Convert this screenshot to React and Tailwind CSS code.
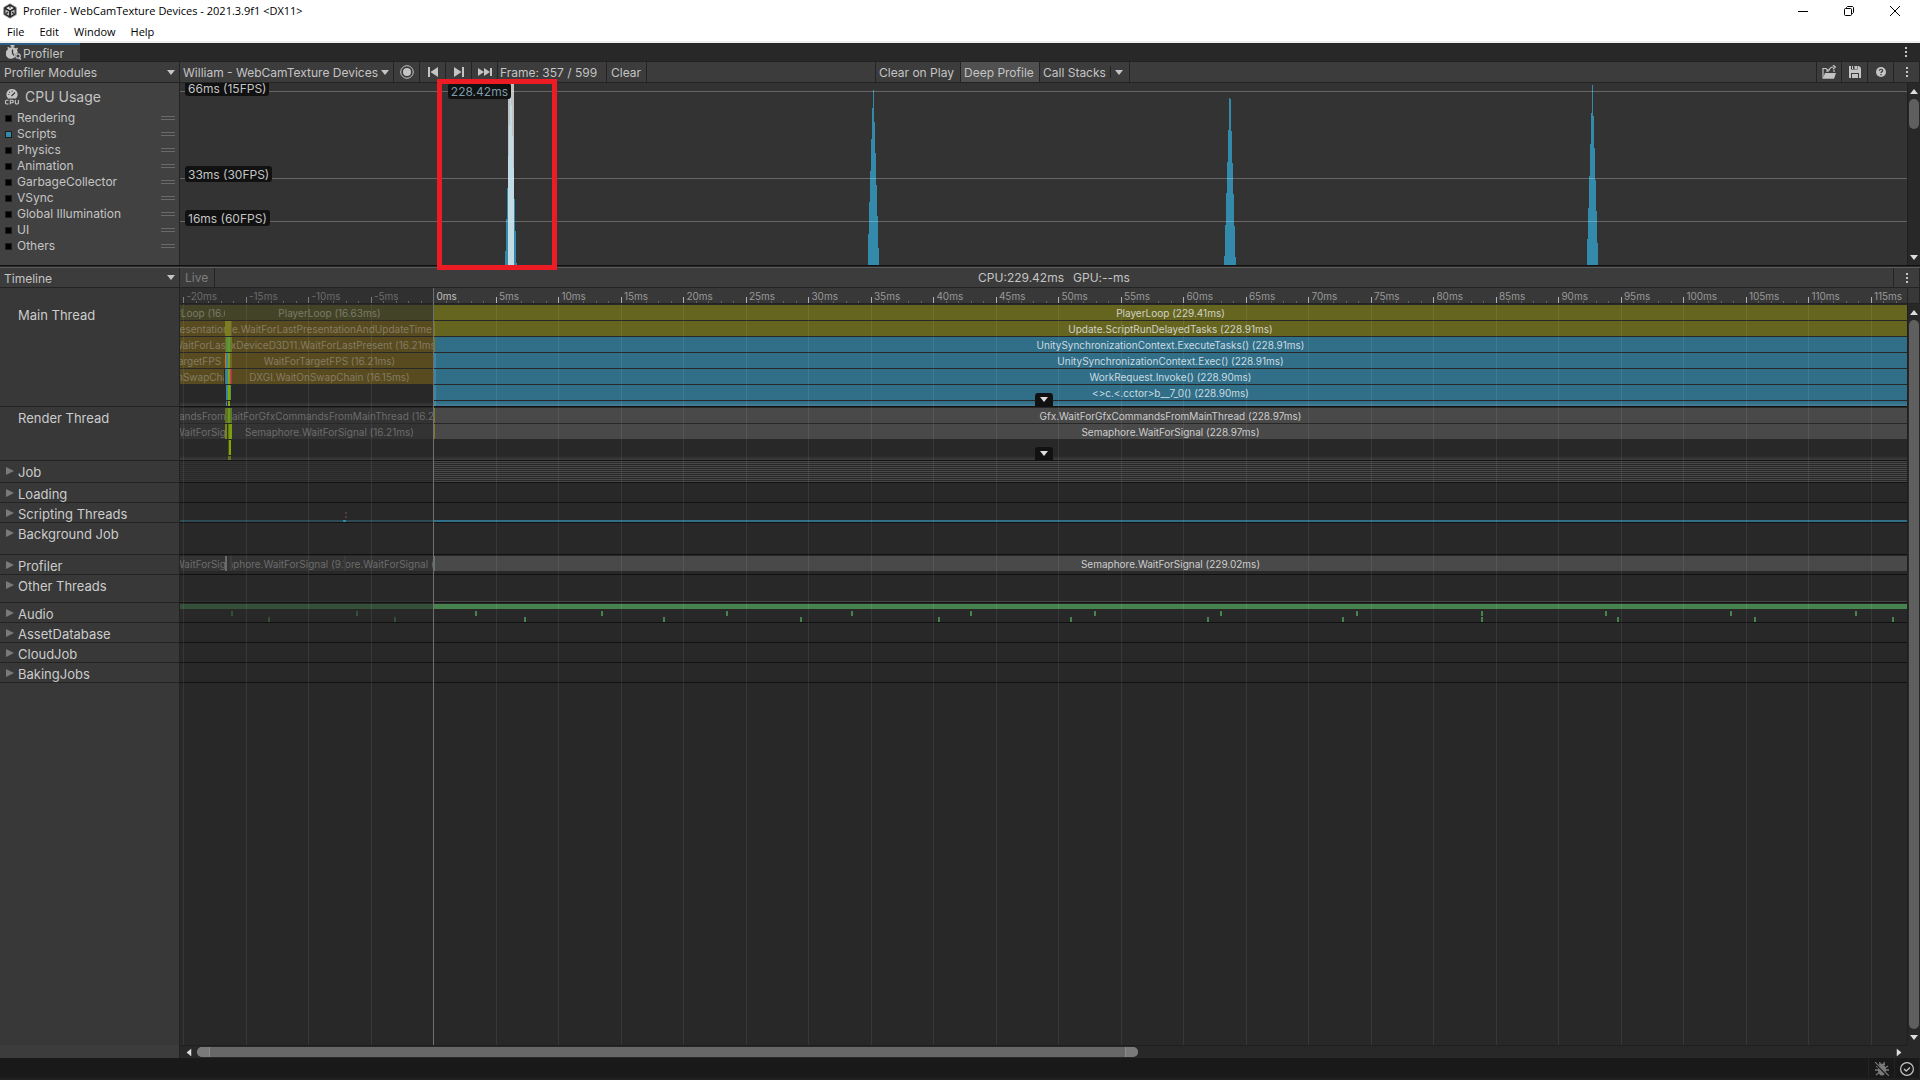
import React from "react";

/* ---------- data ---------- */

const MODULES = [
  ["Rendering", false],
  ["Scripts", true],
  ["Physics", false],
  ["Animation", false],
  ["GarbageCollector", false],
  ["VSync", false],
  ["Global Illumination", false],
  ["UI", false],
  ["Others", false],
];

// Column heights in px for each one-pixel column of a spike.
const SPIKES = [
  { at: 325, cols: [14, 46, 77, 109, 140, 168, 160, 129, 97, 66, 34, 2] },
  { at: 688, cols: [31, 63, 94, 126, 157, 175, 143, 112, 80, 49, 17] },
  { at: 1044, cols: [9, 40, 72, 103, 135, 167, 166, 134, 102, 71, 39, 8] },
  { at: 1407, cols: [26, 57, 89, 121, 152, 180, 149, 117, 85, 54, 22] },
];

const VIEW = 1727;
const MS = 12.5;
const ZERO = 253.4;
const pct = (px) => `${(px / VIEW) * 100}%`;
const timeToPct = (ms) => pct(ZERO + ms * MS);

const MAJOR = Array.from({ length: 28 }, (_, i) => -20 + i * 5);
const MINOR = Array.from({ length: 138 }, (_, i) => -20 + i).filter((t) => t % 5 !== 0);

const OLIVE_DIM = "bg-[#434327] text-[#7b7b68]";
const OLIVE = "bg-[#656520] text-[#d2d2c6]";
const GOLD_DIM = "bg-[#584b1f] text-[#857c62]";
const BLUE = "bg-[#316f88] text-[#cbdbe1]";
const GREY = "bg-[#494949] text-[#cdcdcd]";
const GREY_DIM = "bg-[#333333] text-[#6c6c6c]";

const A = [0, 45];
const B = [46, 253];
const C = [254, VIEW];

const past = (label, tone) => [
  { span: A, label, tone },
  { span: B, label, tone },
];

const MAIN_ROWS = [
  [...past("PlayerLoop (16.63ms)", OLIVE_DIM), { span: C, label: "PlayerLoop (229.41ms)", tone: OLIVE }],
  [
    ...past("TimeUpdate.WaitForLastPresentationAndUpdateTime (16.21ms)", GOLD_DIM),
    { span: C, label: "Update.ScriptRunDelayedTasks (228.91ms)", tone: OLIVE },
  ],
  [
    ...past("GfxDeviceD3D11.WaitForLastPresent (16.21ms)", GOLD_DIM),
    { span: C, label: "UnitySynchronizationContext.ExecuteTasks() (228.91ms)", tone: BLUE },
  ],
  [
    ...past("WaitForTargetFPS (16.21ms)", GOLD_DIM),
    { span: C, label: "UnitySynchronizationContext.Exec() (228.91ms)", tone: BLUE },
  ],
  [
    ...past("DXGI.WaitOnSwapChain (16.15ms)", GOLD_DIM),
    { span: C, label: "WorkRequest.Invoke() (228.90ms)", tone: BLUE },
  ],
  [{ span: C, label: "<>c.<.cctor>b__7_0() (228.90ms)", tone: BLUE }],
  [{ span: C, label: "", tone: BLUE }],
];

// Thin samples between two frames: [x, width, colour] per row.
const MAIN_SLIVERS = [
  [[45, 1, "bg-[#434327]"]],
  [[45, 6, "bg-[#7c7c22]"], [51, 1, "bg-[#6b6030]"], [253, 2, "bg-[#7c7c22]"]],
  [[45, 1, "bg-[#6a6a28]"], [46, 2, "bg-[#5f8a3a]"], [48, 2, "bg-[#5f9a30]"], [50, 2, "bg-[#6e7a2c]"], [253, 2, "bg-[#7c7c22]"]],
  [[45, 1, "bg-[#c87818]"], [46, 2, "bg-[#3c86a0]"], [48, 2, "bg-[#7c9a1e]"], [50, 2, "bg-[#6e6824]"], [253, 1, "bg-[#c87818]"], [254, 2, "bg-[#3a86a4]"]],
  [[44, 1, "bg-[#282828]"], [45, 1, "bg-[#4c7a6a]"], [46, 2, "bg-[#3488a0]"], [48, 2, "bg-[#85a010]"], [50, 1, "bg-[#c04050]"], [51, 1, "bg-[#a03c48]"], [254, 2, "bg-[#3a86a4]"]],
  [[46, 2, "bg-[#3488a0]"], [48, 2, "bg-[#85a800]"], [50, 1, "bg-[#4c9a50]"], [254, 2, "bg-[#3a86a4]"]],
  [[46, 1, "bg-[#3488a0]"], [48, 2, "bg-[#85a010]"], [254, 2, "bg-[#3a86a4]"]],
];

const RENDER_ROWS = [
  [
    ...past("Gfx.WaitForGfxCommandsFromMainThread (16.21ms)", GREY_DIM),
    { span: C, label: "Gfx.WaitForGfxCommandsFromMainThread (228.97ms)", tone: GREY },
  ],
  [
    ...past("Semaphore.WaitForSignal (16.21ms)", GREY_DIM),
    { span: C, label: "Semaphore.WaitForSignal (228.97ms)", tone: GREY },
  ],
  [],
  [],
];

const RENDER_SLIVERS = [
  [[45, 3, "bg-[#62702a]"], [48, 2, "bg-[#6f9618]"], [50, 2, "bg-[#5c7a28]"], [254, 1, "bg-[#7c7c22]"]],
  [[45, 2, "bg-[#7c8420]"], [47, 1, "bg-[#33381c]"], [48, 2, "bg-[#5f7a14]"], [49, 3, "bg-[#7e9c10]"], [254, 1, "bg-[#7c7c22]"]],
  [[48, 1, "bg-[#46521c]"], [49, 2, "bg-[#85a800]"]],
  [[48, 3, "bg-[#5a6a1c]"]],
];

const PROFILER_ROWS = [
  [
    { span: A, label: "Semaphore.WaitForSignal (16.21ms)", tone: GREY_DIM },
    { span: [51, 164], label: "Semaphore.WaitForSignal (9.11ms)", tone: GREY_DIM },
    { span: [165, 253], label: "Semaphore.WaitForSignal (7.02ms)", tone: GREY_DIM },
    { span: C, label: "Semaphore.WaitForSignal (229.02ms)", tone: GREY },
  ],
];
const PROFILER_SLIVERS = [
  [[45, 2, "bg-[#6a6a6a]"], [47, 3, "bg-[#333333]"], [50, 2, "bg-[#3c3c3c]"], [164, 2, "bg-[#3c3c3c]"], [254, 1, "bg-[#707070]"]],
];

const AUDIO_UPPER = [51, 176, 295, 421, 546, 671, 790, 914, 1040, 1176, 1301, 1425, 1550, 1675];
const AUDIO_LOWER = [88, 214, 344, 483, 620, 758, 890, 1027, 1162, 1301, 1437, 1574, 1712];

/* ---------- icons ---------- */

const Down = ({ className = "" }) => (
  <svg viewBox="0 0 8 5" className={"h-[5px] w-2 shrink-0 " + className} fill="currentColor" aria-hidden="true">
    <path d="M0 0h8L4 5z" />
  </svg>
);

const UnityIcon = () => (
  <svg viewBox="0 0 16 16" className="size-4" aria-hidden="true">
    <path d="M8 .8 14.2 4.400v7.200L8 15.200 1.800 11.600V4.400z" fill="#222" stroke="#8a8a8a" strokeWidth=".9" />
    <path d="M8 3l3.800 2.100L8 7.300 4.200 5.100z" fill="#f2f2f2" />
    <path d="M3.400 6.400l3.700 2.200v4.100L3.400 10.600z M12.600 6.400 8.900 8.600v4.100l3.700-2.100z" fill="#bdbdbd" />
    <path d="M8 3v2.500M4 10.500l2-1.200M12 10.500l-2-1.200" stroke="#222" strokeWidth="1.200" fill="none" />
  </svg>
);

const StopwatchIcon = () => (
  <svg viewBox="0 0 16 16" className="size-4" aria-hidden="true">
    <path
      d="M4.500 0h4v1.500h-1v1A5 5 0 0 1 10 3.500l1-1 1 1-1 1.200a5.300 5.300 0 0 1 .6 3.300 3.500 3.500 0 0 0-2.600 4A5.300 5.300 0 1 1 2.200 4L1.200 2.800l1-1 1.200 1A5 5 0 0 1 5.500 2.500v-1h-1z"
      fill="#c4c4c4"
    />
    <path d="M6.500 4.500V8l1.500 2.500" stroke="#333" strokeWidth="1.300" fill="none" />
    <circle cx="12" cy="11" r="2.200" stroke="#c4c4c4" strokeWidth="1.200" fill="none" />
    <path d="M13 12.500l1.800 2" stroke="#c4c4c4" strokeWidth="1.300" />
  </svg>
);

const CpuIcon = () => (
  <svg viewBox="0 0 16 16" className="size-4" aria-hidden="true">
    <path d="M8 0a5.500 5.500 0 0 1 5.200 7.500L12 9.500H4L2.800 7.500A5.500 5.500 0 0 1 8 0z" fill="#c4c4c4" />
    <path d="M7.500 7 11 3.500M4.300 5.500h1M8 1.700v1M5.300 3l.6.6" stroke="#3a3a3a" strokeWidth="1.200" />
    <path
      d="M4.500 11.300H2.500L1.500 12v2.200l1 .8h2M6.300 15.300v-4h2l1 .8v.8l-1 .8H6.500M11.300 11v3.200l.8.800h1.500l.8-.8V11"
      stroke="#c4c4c4"
      strokeWidth="1.100"
      fill="none"
    />
  </svg>
);

const RecordIcon = () => (
  <svg viewBox="0 0 14 14" className="size-[14px]" aria-hidden="true">
    <circle cx="7" cy="7" r="6.300" stroke="#c4c4c4" fill="none" />
    <circle cx="7" cy="7" r="4" fill="#c4c4c4" />
  </svg>
);
const PrevIcon = () => (
  <svg viewBox="0 0 10 10" className="size-[10px]" fill="#c4c4c4" aria-hidden="true">
    <path d="M0 0h2v10H0zM10 0v10L2.500 5z" />
  </svg>
);
const NextIcon = () => (
  <svg viewBox="0 0 10 10" className="size-[10px]" fill="#c4c4c4" aria-hidden="true">
    <path d="M8 0h2v10H8zM0 0v10l7.500-5z" />
  </svg>
);
const LastIcon = () => (
  <svg viewBox="0 0 14 10" className="h-[10px] w-[14px]" fill="#c4c4c4" aria-hidden="true">
    <path d="M0 1v8l6-4zM6 1v8l6-4zM12 1h2v8h-2z" />
  </svg>
);
const FolderIcon = () => (
  <svg viewBox="0 0 14 14" className="size-[14px]" aria-hidden="true">
    <path d="M1 13.500V3.500h3l1.500 1.500h2" stroke="#c4c4c4" strokeWidth="1.200" fill="none" />
    <path d="M.8 13.800 3 8h11l-2 5.800z" fill="#c4c4c4" />
    <path
      d="M5 7V5.800h2M7 5.500C7.500 3 9 2 11.500 2M11 0l2.500 2L11 4.200M12 5v2"
      stroke="#c4c4c4"
      strokeWidth="1.200"
      fill="none"
    />
  </svg>
);
const SaveIcon = () => (
  <svg viewBox="0 0 12 12" className="size-3" aria-hidden="true">
    <path d="M0 0h10l2 2v10H0z" fill="#c4c4c4" />
    <path d="M2 0h6.500v3.500H2zM2 7h8v5H2z" fill="#3c3c3c" />
    <path d="M3 0h1v3H3zM5.500 0H8v3H5.500zM3 8h6v4H3z" fill="#c4c4c4" />
  </svg>
);
const HelpIcon = () => (
  <svg viewBox="0 0 10 10" className="size-[10px]" aria-hidden="true">
    <circle cx="5" cy="5" r="5" fill="#c4c4c4" />
    <path d="M3.400 3.700c.1-2 3.300-1.800 3.200 0C6.500 4.800 5 4.700 5 6" stroke="#333" strokeWidth="1.200" fill="none" />
    <path d="M4.400 7h1.200v1.200H4.400z" fill="#333" />
  </svg>
);
const Kebab = () => (
  <svg viewBox="0 0 2 10" className="h-[10px] w-0.5" fill="#c4c4c4" aria-hidden="true">
    <path d="M0 0h2v2H0zM0 4h2v2H0zM0 8h2v2H0z" />
  </svg>
);
const BugIcon = () => (
  <svg viewBox="0 0 14 14" className="size-[14px]" aria-hidden="true">
    <ellipse cx="7" cy="8" rx="4" ry="5.500" fill="#7a7a7a" />
    <path
      d="M4 2.500h6M1 4l3 2M13 4l-3 2M0 8h4M14 8h-4M1 13l3-2.500M13 13l-3-2.500M4.500 0l1 2.500M9.500 0l-1 2.500"
      stroke="#7a7a7a"
      strokeWidth="1.300"
      fill="none"
    />
    <path d="M0 1l13 13" stroke="#191919" strokeWidth="2" />
    <path d="M0 0l14 14" stroke="#7a7a7a" strokeWidth="1.200" />
  </svg>
);
const CheckCircle = () => (
  <svg viewBox="0 0 14 14" className="size-[14px]" fill="none" stroke="#c4c4c4" aria-hidden="true">
    <circle cx="7" cy="7" r="6.400" strokeWidth="1.200" />
    <path d="M4 7l2.200 2L10 5.500" strokeWidth="1.300" />
  </svg>
);

/* ---------- building blocks ---------- */

const ToolButton = ({ label, className = "", children }) => (
  <button
    type="button"
    aria-label={label}
    className={"flex h-full shrink-0 items-center border-r border-[#232323] " + className}
  >
    {children}
  </button>
);

const Dropdown = ({ label, value, className = "" }) => (
  <div className={"relative flex h-full shrink-0 items-center border-r border-[#232323] " + className}>
    <select
      aria-label={label}
      defaultValue={value}
      className="h-full w-full appearance-none bg-transparent pt-0.5 text-xs text-[#c4c4c4] outline-none"
    >
      <option>{value}</option>
    </select>
    <Down className="pointer-events-none absolute right-1" />
  </div>
);

const VScroll = ({ thumb, className = "" }) => (
  <div className={"flex w-[13px] shrink-0 flex-col items-center border-l border-[#1f1f1f] bg-[#282828] " + className}>
    <button type="button" aria-label="Scroll up" className="flex h-4 items-center text-[#dcdcdc]">
      <Down className="rotate-180" />
    </button>
    <div className="flex min-h-0 w-full flex-1 flex-col pl-px">
      <div className={"w-[10px] rounded-full bg-[#5f5f5f] " + thumb} />
    </div>
    <button type="button" aria-label="Scroll down" className="flex h-4 items-center text-[#dcdcdc]">
      <Down />
    </button>
  </div>
);

const Spike = ({ at, cols }) => (
  <svg
    className="absolute bottom-0 h-[182px] w-3"
    viewBox="0 0 12 182"
    style={{ left: pct(at) }}
    shapeRendering="crispEdges"
    fill="#338aab"
    aria-hidden="true"
  >
    {cols.map((h, i) => (
      <rect key={i} x={i} y={182 - h} width="1" height={h} />
    ))}
  </svg>
);

const ChartLabel = ({ children, className = "" }) => (
  <span className={"absolute flex h-4 items-center rounded-[3px] bg-[#111111] px-[3px] pt-0.5 text-xs " + className}>
    {children}
  </span>
);

const Bars = ({ rows, slivers }) => (
  <div className="flex flex-col gap-px pt-px">
    {rows.map((row, r) => (
      <div key={r} className="relative h-[15px]">
        {row.map((bar, i) => (
          <div
            key={i}
            className={
              "absolute inset-y-0 flex items-center justify-center overflow-hidden text-[10px] leading-none whitespace-nowrap " +
              bar.tone
            }
            style={{ left: pct(bar.span[0]), width: pct(bar.span[1] - bar.span[0]) }}
          >
            <span className="shrink-0">{bar.label}</span>
          </div>
        ))}
        {slivers[r].map(([x, w, c], i) => (
          <div key={i} className={"absolute inset-y-0 " + c} style={{ left: pct(x), width: pct(w) }} />
        ))}
      </div>
    ))}
  </div>
);

const Track = ({ name, height, fold = true, more = false, children }) => (
  <div className={"flex shrink-0 " + height}>
    <div className="w-[180px] shrink-0 border-r border-b border-[#232323] bg-[#383838]">
      {fold ? (
        <button type="button" className="flex h-5 items-center gap-1 pl-1.5 text-[13px] leading-4 text-[#cccccc]">
          <svg viewBox="0 0 8 8" className="size-2" fill="#7a7a7a" aria-hidden="true">
            <path d="M0 0l8 4-8 4z" />
          </svg>
          <span className="pt-0.5">{name}</span>
        </button>
      ) : (
        <h3 className="flex h-5 items-center pt-0.5 pl-[18px] text-[13px] leading-4 text-[#cccccc]">{name}</h3>
      )}
    </div>
    <div className="relative min-w-0 flex-1 overflow-hidden border-b border-[#111111]">
      {children}
      {more && (
        <>
          <div className="absolute inset-x-0 bottom-0 h-1 bg-gradient-to-b from-transparent to-white/10" />
          <button
            type="button"
            aria-label={"Expand " + name}
            className="absolute bottom-0 left-1/2 flex h-[13px] w-[18px] -translate-x-1/2 items-center justify-center rounded-t-[3px] bg-[#111111] text-[#dcdcdc]"
          >
            <Down />
          </button>
        </>
      )}
    </div>
  </div>
);

/* ---------- page ---------- */

export default function App() {
  return (
    <div className="flex h-screen flex-col overflow-hidden bg-[#282828] font-['Inter',sans-serif] text-xs text-[#c4c4c4]">
      <header className="shrink-0 border-b-2 border-[#f0f0f0] bg-white font-['Open_Sans',sans-serif] text-black">
        <div className="flex h-[22px] items-center pr-0.5 pl-[2px]">
          <UnityIcon />
          <h1 className="ml-[5px] flex-1 pt-px text-[11px]">Profiler - WebCamTexture Devices - 2021.3.9f1 &lt;DX11&gt;</h1>
          <button type="button" aria-label="Minimize" className="flex w-[46px] justify-center">
            <svg viewBox="0 0 10 10" className="size-[10px]" stroke="#000" aria-hidden="true">
              <path d="M0 5.500h10" />
            </svg>
          </button>
          <button type="button" aria-label="Restore" className="flex w-[46px] justify-center">
            <svg viewBox="0 0 10 10" className="size-[10px]" stroke="#000" fill="none" aria-hidden="true">
              <rect x=".5" y="2.500" width="7" height="7" rx="1" />
              <path d="M2.500 2V1.500l1-1h5l1 1v5l-1 1H8" />
            </svg>
          </button>
          <button type="button" aria-label="Close" className="flex w-[46px] justify-center">
            <svg viewBox="0 0 10 10" className="size-[10px]" stroke="#000" aria-hidden="true">
              <path d="M0 0l10 10M10 0L0 10" />
            </svg>
          </button>
        </div>
        <nav className="flex h-[19px] items-center gap-[15px] pt-0.5 pl-[7px] text-[11px]">
          <button type="button">File</button>
          <button type="button">Edit</button>
          <button type="button">Window</button>
          <button type="button">Help</button>
        </nav>
      </header>

      <div className="flex h-[19px] shrink-0 border-b border-[#232323]">
        <button type="button" className="flex w-20 items-center gap-px border-t-2 border-[#2c5d87] bg-[#3c3c3c] pl-1.5">
          <StopwatchIcon />
          <span className="pt-0.5">Profiler</span>
        </button>
        <div className="flex-1" />
        <button type="button" aria-label="Tab options" className="flex w-[26px] items-center justify-center">
          <Kebab />
        </button>
        <div className="w-px" />
      </div>

      <div className="flex h-[21px] shrink-0 items-center border-b border-[#232323] bg-[#3c3c3c]">
        <Dropdown label="Modules" value="Profiler Modules" className="w-[180px] pl-1" />
        <Dropdown label="Target" value="William - WebCamTexture Devices" className="w-[214px] pl-[3px]" />
        <ToolButton label="Record" className="w-[26px] justify-center"><RecordIcon /></ToolButton>
        <ToolButton label="Previous frame" className="w-[26px] justify-center"><PrevIcon /></ToolButton>
        <ToolButton label="Next frame" className="w-[26px] justify-center"><NextIcon /></ToolButton>
        <ToolButton label="Current frame" className="w-[26px] justify-center"><LastIcon /></ToolButton>
        <div className="flex h-full w-[109px] shrink-0 items-center border-r border-[#232323] pt-0.5 pl-0.5">Frame: 357 / 599</div>
        <ToolButton label="Clear" className="w-10 pt-0.5 pl-1">Clear</ToolButton>
        <div className="h-full flex-1 border-r border-[#232323]" />
        <ToolButton label="Clear on Play" className="w-[85px] pt-0.5 pl-[3px]">Clear on Play</ToolButton>
        <ToolButton label="Deep Profile" className="w-[79px] bg-[#505050] pt-0.5 pl-[3px]">Deep Profile</ToolButton>
        <ToolButton label="Call Stacks" className="w-[90px] pl-[3px]">
          <span className="pt-0.5">Call Stacks</span>
          <span className="mx-1 h-3 w-px bg-[#232323]" />
          <Down />
        </ToolButton>
        <div className="h-full w-[687px] shrink border-r border-[#232323]" />
        <ToolButton label="Load" className="w-[25px] justify-center"><FolderIcon /></ToolButton>
        <ToolButton label="Save" className="w-[26px] justify-center"><SaveIcon /></ToolButton>
        <ToolButton label="Help" className="w-[26px] justify-center"><HelpIcon /></ToolButton>
        <ToolButton label="Options" className="w-[26px] justify-center"><Kebab /></ToolButton>
      </div>

      <section className="flex shrink-0">
        <div className="w-[180px] shrink-0 border-r border-[#232323] bg-[#414141]">
          <h2 className="flex h-[27px] items-center gap-[5px] pl-1 text-sm">
            <CpuIcon />
            CPU Usage
          </h2>
          <ul>
            {MODULES.map(([name, on]) => (
              <li key={name} className="flex h-4 items-center justify-between pr-1">
                <label className="flex items-center gap-[5px] pl-[5px]">
                  <input
                    type="checkbox"
                    defaultChecked={on}
                    className="size-[7px] appearance-none border border-[#1c1c1c] bg-black checked:bg-[#338aab]"
                  />
                  {name}
                </label>
                <span className="h-1 w-3.5 border-y border-[#6a6a6a]" />
              </li>
            ))}
          </ul>
        </div>
        <div className="relative h-[182px] flex-1 bg-[#333333]">
          <div className="absolute inset-0 overflow-hidden">
            {SPIKES.map((s) => (
              <Spike key={s.at} at={s.at} cols={s.cols} />
            ))}
            <div className="absolute inset-y-0 w-1.5 bg-white/70" style={{ left: pct(328) }} />
            <div className="absolute inset-x-0 top-2 h-px bg-white/25" />
            <div className="absolute inset-x-0 top-[95px] h-px bg-white/25" />
            <div className="absolute inset-x-0 top-[138px] h-px bg-white/25" />
            <ChartLabel className="-top-[3px] left-[5px]">66ms (15FPS)</ChartLabel>
            <ChartLabel className="top-[83px] left-[5px]">33ms (30FPS)</ChartLabel>
            <ChartLabel className="top-[127px] left-[5px]">16ms (60FPS)</ChartLabel>
            <div className="absolute top-0 h-4" style={{ left: pct(331) }}>
              <ChartLabel className="right-0 text-[#7b9cab]">228.42ms</ChartLabel>
            </div>
          </div>
          <div className="absolute -top-1 z-10 h-[191px] w-[120px] border-[5px] border-[#ed1c24]" style={{ left: pct(257) }} />
        </div>
        <VScroll thumb="h-[30px]" />
      </section>

      <div className="h-[3px] shrink-0 border-t border-b border-t-[#111111] border-b-[#5a5a5a]" />

      <div className="flex h-5 shrink-0 items-center border-b border-[#232323] bg-[#3c3c3c]">
        <Dropdown label="View" value="Timeline" className="w-[180px] pl-1" />
        <ToolButton label="Live" className="w-[35px] pt-px pl-[5px] text-[#7d7d7d]">Live</ToolButton>
        <div className="flex h-full flex-1 items-center justify-center gap-[9px] border-r border-[#232323] pt-px">
          <span>CPU:229.42ms</span>
          <span>GPU:--ms</span>
        </div>
        <ToolButton label="Timeline options" className="w-[26px] justify-center"><Kebab /></ToolButton>
      </div>

      <main className="flex min-h-0 flex-1">
        <div className="relative flex min-w-0 flex-1 flex-col overflow-hidden">
          <div className="flex h-4 shrink-0">
            <div className="w-[180px] shrink-0 border-r border-[#232323] bg-[#383838]" />
            <div className="relative min-w-0 flex-1 overflow-hidden border-b border-[#232323] bg-[#383838] text-[10px] leading-none">
              <div className="absolute inset-y-0 left-0 bg-[#303030]" style={{ width: pct(253) }} />
              {MINOR.map((t) => (
                <span key={t} className="absolute bottom-0 h-0.5 w-px bg-[#666666]" style={{ left: timeToPct(t) }} />
              ))}
              {MAJOR.map((t) => (
                <span
                  key={t}
                  className={
                    "absolute bottom-0 flex h-[15px] items-end whitespace-nowrap " +
                    (t < 0 ? "text-[#6b6b6b]" : t === 0 ? "text-[#c0c0c0]" : "text-[#999999]")
                  }
                  style={{ left: timeToPct(t) }}
                >
                  <span className={"h-1.5 w-px " + (t < 0 ? "bg-[#7a7a7a]" : "bg-[#b0b0b0]")} />
                  <span className="pb-0.5 pl-0.5">{t}ms</span>
                </span>
              ))}
            </div>
          </div>

          <Track name="Main Thread" height="h-[103px]" fold={false} more>
            <Bars rows={MAIN_ROWS} slivers={MAIN_SLIVERS} />
          </Track>
          <Track name="Render Thread" height="h-[54px]" fold={false} more>
            <Bars rows={RENDER_ROWS} slivers={RENDER_SLIVERS} />
          </Track>
          <Track name="Job" height="h-[22px]">
            <div className="h-full bg-[repeating-linear-gradient(to_bottom,#494949_0px,#494949_1px,#282828_1px,#282828_2px)]" />
            <div className="absolute inset-y-0 left-0 bg-[#282828]/65" style={{ width: pct(253) }} />
          </Track>
          <Track name="Loading" height="h-5" />
          <Track name="Scripting Threads" height="h-5">
            <div className="absolute bottom-0 left-0 h-0.5 bg-[#2d4a55]" style={{ width: pct(253) }} />
            <div className="absolute right-0 bottom-0 h-0.5 bg-[#316f88]" style={{ left: pct(254) }} />
            <div className="absolute bottom-0 h-0.5 w-[3px] bg-[#338aab]" style={{ left: pct(163) }} />
            <div className="absolute bottom-1 h-1.5 w-0.5 border-y-2 border-[#57384f]" style={{ left: pct(165) }} />
          </Track>
          <Track name="Background Job" height="h-8" />
          <Track name="Profiler" height="h-5">
            <Bars rows={PROFILER_ROWS} slivers={PROFILER_SLIVERS} />
          </Track>
          <Track name="Other Threads" height="h-7">
            <div className="absolute right-0 bottom-0 h-px bg-[#494949]" style={{ left: pct(254) }} />
            <div className="absolute bottom-0 left-0 h-px bg-[#333333]" style={{ width: pct(253) }} />
          </Track>
          <Track name="Audio" height="h-5">
            <div className="absolute top-px left-0 h-[5px] bg-[#345039]" style={{ width: pct(253) }} />
            <div className="absolute top-px right-0 h-[5px] bg-[#47834f]" style={{ left: pct(253) }} />
            {AUDIO_UPPER.map((x) => (
              <div
                key={x}
                className={"absolute top-2 h-[5px] w-0.5 " + (x < 253 ? "bg-[#345039]" : "bg-[#47834f]")}
                style={{ left: pct(x) }}
              />
            ))}
            {AUDIO_LOWER.map((x) => (
              <div
                key={x}
                className={"absolute bottom-0 h-[5px] w-0.5 " + (x < 253 ? "bg-[#345039]" : "bg-[#47834f]")}
                style={{ left: pct(x) }}
              />
            ))}
          </Track>
          <Track name="AssetDatabase" height="h-5" />
          <Track name="CloudJob" height="h-5" />
          <Track name="BakingJobs" height="h-5" />

          <div className="flex min-h-0 flex-1">
            <div className="w-[180px] shrink-0 border-r border-[#232323] bg-[#383838]" />
            <div className="flex-1" />
          </div>

          <div className="pointer-events-none absolute inset-y-0 right-0 left-[180px] pt-4 pb-[13px]">
            <div className="relative h-full overflow-hidden">
              {MAJOR.filter((t) => t !== 0).map((t) => (
                <div key={t} className="absolute inset-y-0 w-px bg-white/7" style={{ left: timeToPct(t) }} />
              ))}
            </div>
            <div className="absolute top-0 bottom-[13px] w-px bg-[#707070]" style={{ left: pct(253) }} />
          </div>

          <div className="flex h-[13px] shrink-0">
            <div className="w-[180px] shrink-0 border-r border-[#232323] bg-[#3c3c3c]" />
            <div className="z-10 flex min-w-0 flex-1 items-center border-t border-[#1f1f1f] bg-[#282828] text-[#dcdcdc]">
              <button type="button" aria-label="Scroll left" className="flex w-[17px] justify-center">
                <Down className="rotate-90" />
              </button>
              <div className="min-w-0 flex-1">
                <div className="flex h-[10px] w-5/9 justify-between overflow-hidden rounded-full bg-[#676767]">
                  <span className="w-[13px] border-r border-[#8a8a8a] bg-[#7a7a7a]" />
                  <span className="w-[13px] border-l border-[#8a8a8a] bg-[#7a7a7a]" />
                </div>
              </div>
              <button type="button" aria-label="Scroll right" className="flex w-[17px] justify-center">
                <Down className="-rotate-90" />
              </button>
            </div>
          </div>
        </div>
        <div className="flex shrink-0 flex-col">
          <div className="h-4 border-x border-b border-[#232323] bg-[#383838]" />
          <VScroll thumb="h-full" className="min-h-0 flex-1" />
          <div className="h-[13px]" />
        </div>
      </main>

      <footer className="flex h-[22px] shrink-0 items-center justify-end border-b-2 border-[#232023] bg-[#191919]">
        <button type="button" aria-label="Debugger" className="flex h-full w-[26px] items-center justify-center border-l border-[#232323] pt-0.5">
          <BugIcon />
        </button>
        <button type="button" aria-label="Activity" className="flex h-full w-[26px] items-center justify-center border-x border-[#232323] pt-0.5">
          <CheckCircle />
        </button>
      </footer>
    </div>
  );
}
